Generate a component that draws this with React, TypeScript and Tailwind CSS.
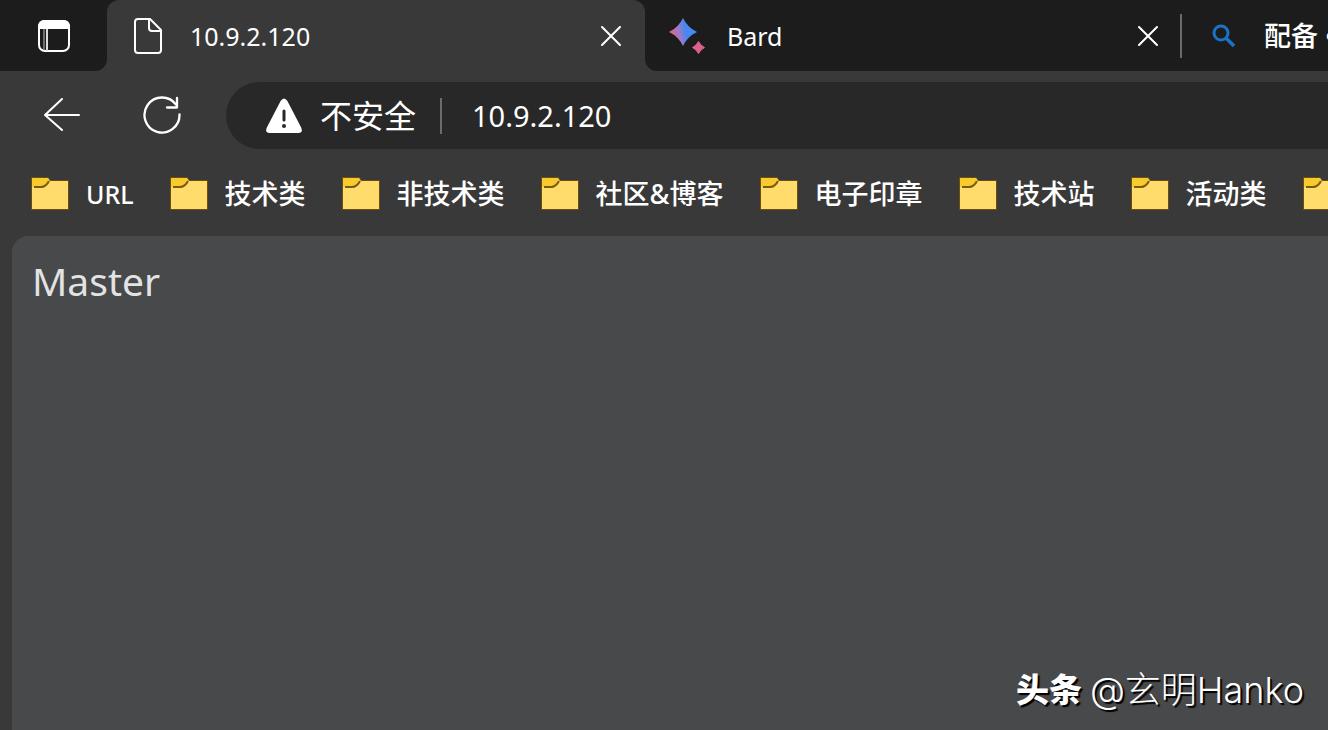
import { useState } from "react";

interface IBookmark {
  id: number;
  title: string;
}

const bookmarks: IBookmark[] = [
  { id: 1, title: "URL" },
  { id: 2, title: "技术类" },
  { id: 3, title: "非技术类" },
  { id: 4, title: "社区&博客" },
  { id: 5, title: "电子印章" },
  { id: 6, title: "技术站" },
  { id: 7, title: "活动类" },
  { id: 8, title: "" },
];

function PanelIcon() {
  return (
    <svg className="h-8 w-8" viewBox="0 0 32 32" fill="none">
      <rect x="1" y="1" width="30" height="30" rx="6" stroke="white" strokeWidth="2" />
      <path d="M0 9V6a6 6 0 0 1 6-6h20a6 6 0 0 1 6 6v3z" fill="white" />
      <path d="M6 9v21" stroke="#8a8a8a" strokeWidth="1.500" />
      <path d="M9 9v22" stroke="#dddddd" strokeWidth="2" />
    </svg>
  );
}

function FileIcon() {
  return (
    <svg className="h-9 w-[28px]" viewBox="0 0 28 36" fill="none" stroke="white" strokeWidth="2" strokeLinejoin="round">
      <path d="M4 1h12l11 11v20a3 3 0 0 1-3 3H4a3 3 0 0 1-3-3V4a3 3 0 0 1 3-3z" />
      <path d="M15 1v9a3 3 0 0 0 3 3h9" />
    </svg>
  );
}

function CloseIcon() {
  return (
    <svg className="h-5 w-5" viewBox="0 0 20 20" fill="none" stroke="white" strokeWidth="2" strokeLinecap="round">
      <path d="M1 1l18 18M19 1L1 19" />
    </svg>
  );
}

function BardIcon() {
  return (
    <svg className="h-9 w-9 shrink-0" viewBox="0 0 36 36">
      <defs>
        <linearGradient id="spark" x1="0" y1="0.6" x2="1" y2="0.4">
          <stop offset="0.05" stopColor="#e0647a" />
          <stop offset="0.35" stopColor="#a07ac8" />
          <stop offset="0.6" stopColor="#4a86f0" />
          <stop offset="1" stopColor="#3f8df5" />
        </linearGradient>
      </defs>
      <path d="M14 0q4.500 9.500 14 14q-9.500 4.500-14 14q-4.500-9.500-14-14q9.500-4.500 14-14z" fill="url(#spark)" />
      <path d="M29.500 23.500q2 4 6 6q-4 2-6 6q-2-4-6-6q4-2 6-6z" fill="#d9638b" stroke="#d9638b" />
    </svg>
  );
}

function SearchIcon() {
  return (
    <svg className="h-6 w-6" viewBox="0 0 24 24" fill="none" stroke="#1a73c9" strokeWidth="3">
      <circle cx="9" cy="9" r="7" />
      <path d="M14 14l8 8" strokeWidth="3.500" />
    </svg>
  );
}

function BackIcon() {
  return (
    <svg className="h-9 w-9" viewBox="0 0 36 36" fill="none" stroke="white" strokeWidth="2" strokeLinecap="round" strokeLinejoin="round">
      <path d="M18 1L1 17l17 15M1 17h34" />
    </svg>
  );
}

function RefreshIcon() {
  return (
    <svg className="h-10 w-10" viewBox="0 0 40 40" fill="none" stroke="white" strokeWidth="2.300" strokeLinecap="round" strokeLinejoin="round">
      <path d="M37.500 18.500A17.500 17.500 0 1 1 34 8.500" />
      <path d="M35 2v9.500H25" />
    </svg>
  );
}

function WarningIcon() {
  return (
    <svg className="h-9 w-9" viewBox="0 0 36 36">
      <path d="M14.600 3q3.400-5 6.800 0L35.400 30q1.600 5-3 5H3.600q-4.600 0-3-5z" fill="white" />
      <path d="M18 13v9" stroke="#282828" strokeWidth="3" strokeLinecap="round" />
      <circle cx="18" cy="28" r="2" fill="#282828" />
    </svg>
  );
}

function FolderIcon() {
  return (
    <svg className="h-[33px] w-9 shrink-0 overflow-visible" viewBox="0 0 36 33">
      <path d="M0 1h16l2 3h18v28H0z" fill="#ffdc6b" stroke="#6b4e10" strokeWidth="2" paintOrder="stroke" />
      <path d="M0 1h16v3q-2 6-6 6H0z" fill="#f7cb2d" />
      <path d="M2 10h7q5 0 8-6" fill="none" stroke="#7a5a10" strokeWidth="2" />
    </svg>
  );
}

export default function App() {
  const [address, setAddress] = useState("10.9.2.120");

  return (
    <div className="relative flex h-screen flex-col overflow-hidden bg-[#393939] font-['Noto_Sans','Noto_Sans_CJK_SC',sans-serif] text-white">
      <div className="flex h-[71px] shrink-0">
        <div className="flex w-[107px] shrink-0 items-center justify-center rounded-br-xl bg-[#1c1c1c]">
          <button aria-label="标签页操作">
            <PanelIcon />
          </button>
        </div>

        {/* active tab, dark corners at the top only */}
        <div className="w-[538px] shrink-0 bg-linear-to-b from-[#1c1c1c] from-50% to-[#393939] to-50%">
          <div className="flex h-full items-center rounded-t-xl bg-[#393939] pr-6 pl-[27px]">
            <FileIcon />
            <button className="ml-7 flex-1 text-left text-[25px] leading-8">10.9.2.120</button>
            <button aria-label="关闭标签页">
              <CloseIcon />
            </button>
          </div>
        </div>

        <div className="flex min-w-0 flex-1 items-center overflow-hidden rounded-bl-xl bg-[#1c1c1c] pl-6">
          <BardIcon />
          <button className="ml-[22px] w-[411px] shrink-0 text-left text-[25px] leading-8">Bard</button>
          <button aria-label="关闭标签页">
            <CloseIcon />
          </button>
          <div className="ml-[22px] h-11 w-0.5 shrink-0 bg-[#6b6b6b]" />
          <button className="ml-[30px] flex shrink-0 items-center gap-7 text-[27px] leading-8 font-medium">
            <SearchIcon />
            <span className="whitespace-nowrap">配备 •</span>
          </button>
        </div>
      </div>

      <div className="flex shrink-0 items-center pt-[11px] pl-11">
        <button aria-label="后退">
          <BackIcon />
        </button>
        <button aria-label="刷新" className="ml-[62px]">
          <RefreshIcon />
        </button>
        <div className="ml-11 flex h-[67px] flex-1 items-center rounded-l-full bg-[#282828] pl-10">
          <WarningIcon />
          <span className="ml-[18px] text-[32px] leading-9">不安全</span>
          <div className="ml-6 h-9 w-0.5 bg-[#6b6b6b]" />
          <input
            aria-label="地址"
            type="text"
            value={address}
            onChange={(e) => setAddress(e.target.value)}
            className="ml-[30px] min-w-0 flex-1 bg-transparent text-[29px] leading-9 outline-none"
          />
        </div>
      </div>

      <nav className="flex h-[87px] shrink-0 items-center gap-[37px] overflow-hidden pt-0.5 pl-8">
        {bookmarks.map((b: IBookmark) => {
          return (
            <a key={b.id} href="#" aria-label={b.title || "文件夹"} className="flex shrink-0 items-center gap-[18px] text-[27px] leading-8 font-medium whitespace-nowrap">
              <FolderIcon />
              {b.title && <span className={b.title === "URL" ? "text-[25px]" : ""}>{b.title}</span>}
            </a>
          );
        })}
      </nav>

      <main className="ml-3 flex-1 rounded-tl-2xl bg-[#48494b] px-5 py-5">
        <p className="text-[39px] leading-[50px] text-[#e3e3e3]">Master</p>
      </main>

      <div className="absolute right-6 bottom-4 flex items-center gap-2 font-['Inter','Noto_Sans_CJK_SC',sans-serif] leading-12 [text-shadow:2px_2px_1px_#000]">
        <span className="text-[33px] font-black">头条</span>
        <span className="text-[36px] font-light">@玄明Hanko</span>
      </div>
    </div>
  );
}
